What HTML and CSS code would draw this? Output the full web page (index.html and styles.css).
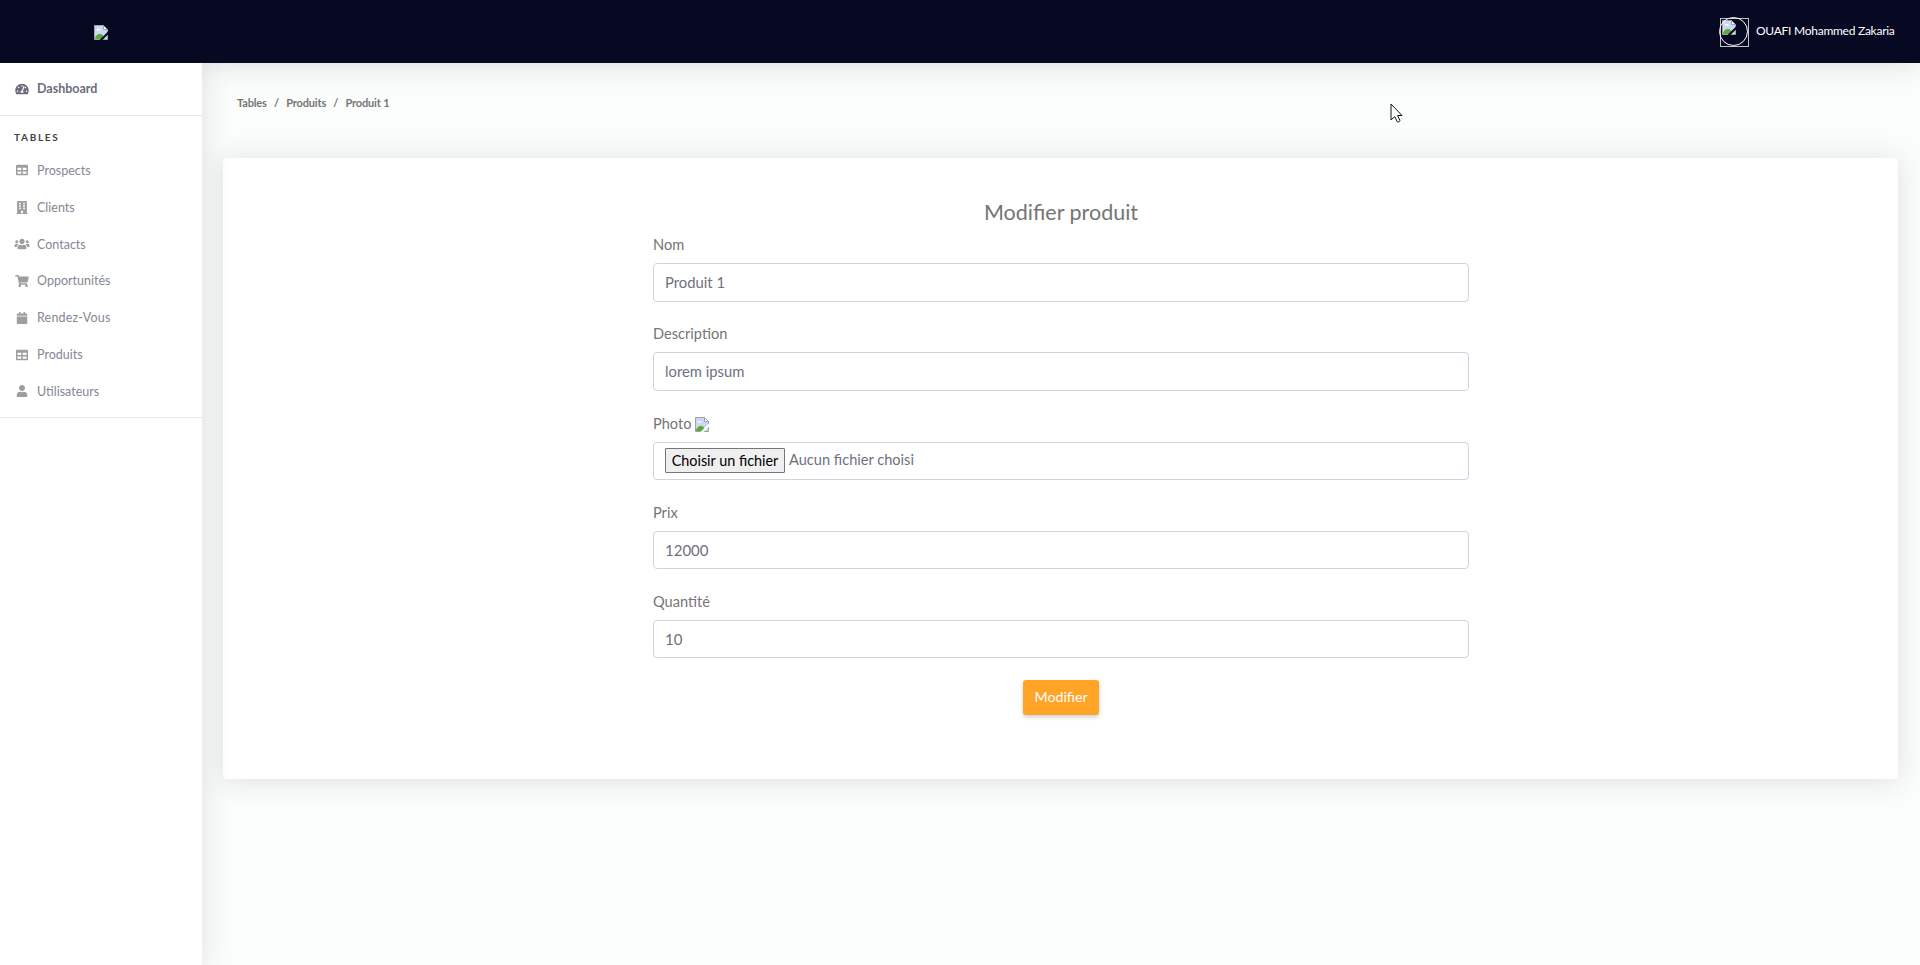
FILE: index.html
```
<!DOCTYPE html>
<html lang="fr">
<head>
<meta charset="utf-8">
<title>Modifier produit</title>
<link rel="stylesheet" href="styles.css">
</head>
<body>
<svg class="defs" width="0" height="0">
  <symbol id="table" viewBox="0 0 512 512"><path d="M464 32H48C21.49 32 0 53.49 0 80v352c0 26.51 21.49 48 48 48h416c26.51 0 48-21.49 48-48V80c0-26.51-21.49-48-48-48zM224 416H64v-96h160v96zm0-160H64v-96h160v96zm224 160H288v-96h160v96zm0-160H288v-96h160v96z"/></symbol>
  <symbol id="broken" viewBox="0 0 14 15">
    <path d="M.5.5h9l4 4v10H.5z" fill="#c9d8f5" stroke="#a3a3a3"/>
    <path d="M2.5 5.5c0-2 2-2 2.5-1.200 1.500-.3 2 .4 2 1.200z" fill="#fff"/>
    <path d="M1 14c0-3 2.500-5 5-5s4 2 4 5z" fill="#57ad35"/>
    <path d="M9.500.5v4h4z" fill="#fff" stroke="#a3a3a3"/>
    <path class="slash" d="M14 6.500V9.500L8.500 15H5.500z"/>
  </symbol>
</svg>
<header class="topbar">
  <div class="brand"><svg class="broken"><use href="#broken"/></svg></div>
  <div class="account">
    <div class="avatar"><svg class="broken"><use href="#broken"/></svg></div>
    <span class="username">OUAFI Mohammed Zakaria</span>
  </div>
</header>
<div class="body">
  <nav class="sidebar">
    <div class="item dashboard">
      <svg class="icon" viewBox="0 0 576 512"><path fill-rule="evenodd" d="M288 32C129 32 0 161 0 320c0 53 14 102 39 145 6 9 16 15 27 15h444c11 0 21-6 27-15 25-43 39-92 39-145C576 161 447 32 288 32zm0 64a32 32 0 1 1 0 64 32 32 0 0 1 0-64zM96 384a32 32 0 1 1 0-64 32 32 0 0 1 0 64zm48-160a32 32 0 1 1 0-64 32 32 0 0 1 0 64zm247-67-61 184c29 19 29 53 14 75H232c-20-40 2-92 53-96l61-178c10-30 55-15 45 15zm41 67a32 32 0 1 1 18-60 32 32 0 0 1-18 60zm48 160a32 32 0 1 1 0-64 32 32 0 0 1 0 64z"/></svg>
      <span class="link">Dashboard</span>
    </div>
    <div class="heading">TABLES</div>
    <div class="list">
      <div class="item"><svg class="icon"><use href="#table"/></svg><span class="link">Prospects</span></div>
      <div class="item"><svg class="icon tall" viewBox="0 0 448 512"><path fill-rule="evenodd" d="M12 480h20V24C32 11 43 0 56 0h336c13 0 24 11 24 24v456h20c7 0 12 5 12 12v20H0v-20c0-7 5-12 12-12zM112 64v64h64V64zm160 0v64h64V64zM112 160v64h64v-64zm160 0v64h64v-64zM112 256v64h64v-64zm160 0v64h64v-64zM184 384v96h80v-96z"/></svg><span class="link">Clients</span></div>
      <div class="item"><svg class="icon" viewBox="0 0 640 512"><path d="M96 224c35.300 0 64-28.700 64-64s-28.700-64-64-64-64 28.700-64 64 28.700 64 64 64zm448 0c35.300 0 64-28.700 64-64s-28.700-64-64-64-64 28.700-64 64 28.700 64 64 64zm32 32h-64c-17.600 0-33.500 7.100-45.100 18.600 40.300 22.100 68.900 62 75.100 109.400h66c17.700 0 32-14.300 32-32v-32c0-35.300-28.700-64-64-64zm-256 0c61.900 0 112-50.100 112-112S381.900 32 320 32 208 82.100 208 144s50.100 112 112 112zm76.800 32h-8.300c-20.800 10-43.900 16-68.500 16s-47.600-6-68.500-16h-8.300C179.600 288 128 339.600 128 403.200V432c0 26.500 21.500 48 48 48h288c26.500 0 48-21.500 48-48v-28.800c0-63.600-51.600-115.200-115.200-115.200zm-223.700-13.400C161.500 263.100 145.600 256 128 256H64c-35.300 0-64 28.700-64 64v32c0 17.700 14.300 32 32 32h65.900c6.300-47.400 34.900-87.300 75.200-109.400z"/></svg><span class="link">Contacts</span></div>
      <div class="item"><svg class="icon" viewBox="0 0 576 512"><path d="M528.120 301.319l47.273-208C578.806 78.301 567.391 64 551.990 64H159.208l-9.166-44.810C147.758 8.021 137.930 0 126.529 0H24C10.745 0 0 10.745 0 24v16c0 13.255 10.745 24 24 24h69.883l70.248 343.435C147.325 417.100 136 435.222 136 456c0 30.928 25.072 56 56 56s56-25.072 56-56c0-15.674-6.447-29.835-16.824-40h209.647C430.447 426.165 424 440.326 424 456c0 30.928 25.072 56 56 56s56-25.072 56-56c0-22.172-12.888-41.332-31.579-50.405l5.517-24.276c3.413-15.018-8.002-29.319-23.403-29.319H218.117l-6.545-32h293.145c11.206 0 20.920-7.754 23.403-18.681z"/></svg><span class="link">Opportunités</span></div>
      <div class="item"><svg class="icon" viewBox="0 0 448 512"><path d="M12 192h424c6.600 0 12 5.400 12 12v260c0 26.500-21.500 48-48 48H48c-26.500 0-48-21.500-48-48V204c0-6.600 5.400-12 12-12zm436-44v-36c0-26.500-21.500-48-48-48h-48V12c0-6.600-5.400-12-12-12h-40c-6.600 0-12 5.400-12 12v52H160V12c0-6.600-5.400-12-12-12h-40c-6.600 0-12 5.400-12 12v52H48C21.500 64 0 85.500 0 112v36c0 6.600 5.400 12 12 12h424c6.600 0 12-5.400 12-12z"/></svg><span class="link spaced">Rendez-Vous</span></div>
      <div class="item"><svg class="icon"><use href="#table"/></svg><span class="link">Produits</span></div>
      <div class="item"><svg class="icon" viewBox="0 0 448 512"><path d="M224 256c70.700 0 128-57.300 128-128S294.700 0 224 0 96 57.300 96 128s57.300 128 128 128zm89.600 32h-16.700c-22.200 10.200-46.900 16-72.900 16s-50.600-5.800-72.900-16h-16.700C60.200 288 0 348.200 0 422.400V464c0 26.500 21.500 48 48 48h352c26.500 0 48-21.500 48-48v-41.600c0-74.200-60.200-134.400-134.400-134.400z"/></svg><span class="link">Utilisateurs</span></div>
    </div>
  </nav>
  <main class="content">
    <div class="breadcrumb"><span>Tables</span><span>/</span><span>Produits</span><span>/</span><span>Produit 1</span></div>
    <section class="card">
      <form class="form">
        <h1 class="title">Modifier produit</h1>
        <div class="group"><div class="label">Nom</div><div class="control">Produit 1</div></div>
        <div class="group"><div class="label">Description</div><div class="control">lorem ipsum</div></div>
        <div class="group"><div class="label">Photo <svg class="broken light"><use href="#broken"/></svg></div><div class="control file"><span class="choose">Choisir un fichier</span><span class="nofile">Aucun fichier choisi</span></div></div>
        <div class="group"><div class="label">Prix</div><div class="control number">12000</div></div>
        <div class="group"><div class="label">Quantité</div><div class="control number">10</div></div>
        <button class="submit" type="button">Modifier</button>
      </form>
    </section>
  </main>
</div>
<svg class="cursor" viewBox="0 0 13 20"><path d="M1 1v16l3.700-3.400 2.600 5.200c1.500.5 2.800-.3 2.600-1.500L7.500 12.500H12z" fill="#fff" stroke="#111122"/></svg>
</body>
</html>
```
FILE: styles.css
```
* { box-sizing: border-box; }
body {
  margin: 0;
  height: 965px;
  display: flex;
  flex-direction: column;
  overflow: hidden;
  font-family: Lato, "Open Sans", sans-serif;
  font-size: 14.600px;
  color: #757575;
  background: #fbfdfc;
}
.defs { position: absolute; }
.broken { display: block; width: 14px; height: 15px; flex: none; color: #070822; }
.broken.light { color: #fff; margin-top: 4px; }
.slash { fill: currentColor; }

.topbar {
  flex: none;
  height: 63px;
  display: flex;
  justify-content: space-between;
  background: #070822;
  box-shadow: 0 2px 28px rgba(58, 59, 69, .15);
  position: relative;
  z-index: 1;
}
.brand { width: 202px; display: flex; justify-content: center; padding-top: 25px; }
.account { display: flex; align-items: flex-start; padding: 18px 25px 0 0; gap: 7px; }
.avatar { width: 29px; height: 29px; border: 1px solid #c3c3c3; padding: 1px; position: relative; }
.avatar::after {
  content: "";
  position: absolute;
  inset: -2px 0 0 -2px;
  border: 1px solid #fff;
  border-radius: 50%;
}
.username { width: 139px; line-height: 26px; font-size: 12px; color: #fff; white-space: nowrap; letter-spacing: -.26px; }

.body { flex: 1; display: flex; min-height: 0; }
.sidebar {
  width: 202px;
  flex: none;
  background: #fff;
  box-shadow: 0 2px 28px rgba(58, 59, 69, .15);
  position: relative;
  z-index: 2;
  clip-path: inset(0 -40px 0 0);
}
.item { height: 36.850px; display: flex; align-items: center; padding-left: 14px; gap: 7px; font-size: 12.500px; color: #858796; }
.icon { width: 16px; height: 12px; fill: #9e9e9e; flex: none; }
.icon.tall { height: 13px; }
.spaced { letter-spacing: .2px; }
.dashboard { height: 53px; padding-bottom: 1px; font-weight: 700; color: #6b6d7c; border-bottom: 1px solid #e6e6ea; }
.dashboard .icon { fill: #6b6d7c; }
.heading { padding: 15px 14px 0; height: 36px; line-height: 13px; font-size: 10px; font-weight: 700; letter-spacing: 1.700px; color: #424242; }
.list { height: 266px; border-bottom: 1px solid #e3e6f0; }

.content { flex: 1; padding: 0 22px 0 21px; }
.breadcrumb { display: flex; gap: 7.200px; padding: 32px 14px 0; height: 95px; line-height: 16px; font-size: 11px; font-weight: 700; letter-spacing: -.15px; }
.card { height: 621px; background: #fff; border-radius: 4px; box-shadow: 0 2px 28px rgba(58, 59, 69, .15); display: flex; justify-content: center; padding: 41px 0 0 1px; }
.form { width: 816px; display: flex; flex-direction: column; }
.title { margin: 0; height: 35.400px; line-height: 27px; font-size: 21.500px; font-weight: 400; text-align: center; }
.group { height: 89.100px; }
.label { height: 29px; line-height: 21px; display: flex; gap: 4px; white-space: nowrap; }
.control { height: 38.500px; border: 1px solid #d1d3e2; border-radius: 4px; padding: 0 11px; font-size: 14.800px; line-height: 37px; color: #6e707e; }
.control.number { font-size: 15px; }
.file { display: flex; gap: 4px; padding-top: 5px; line-height: 24px; font-size: 14.600px; }
.choose { width: 120px; height: 25px; line-height: 23px; border: 1px solid #767676; border-radius: 1px; background: #efefef; color: #000; font-size: 14.400px; text-align: center; white-space: nowrap; }
.submit { align-self: center; width: 76px; height: 35px; margin: 0; padding: 0; border: 0; border-radius: 3px; background: #ffa426; color: #fff; font: inherit; font-size: 14.200px; line-height: 34px; box-shadow: 0 2px 4px rgba(0, 0, 0, .2); }
.cursor { position: absolute; z-index: 3; left: 1390px; top: 103px; width: 13px; height: 20px; }
```
